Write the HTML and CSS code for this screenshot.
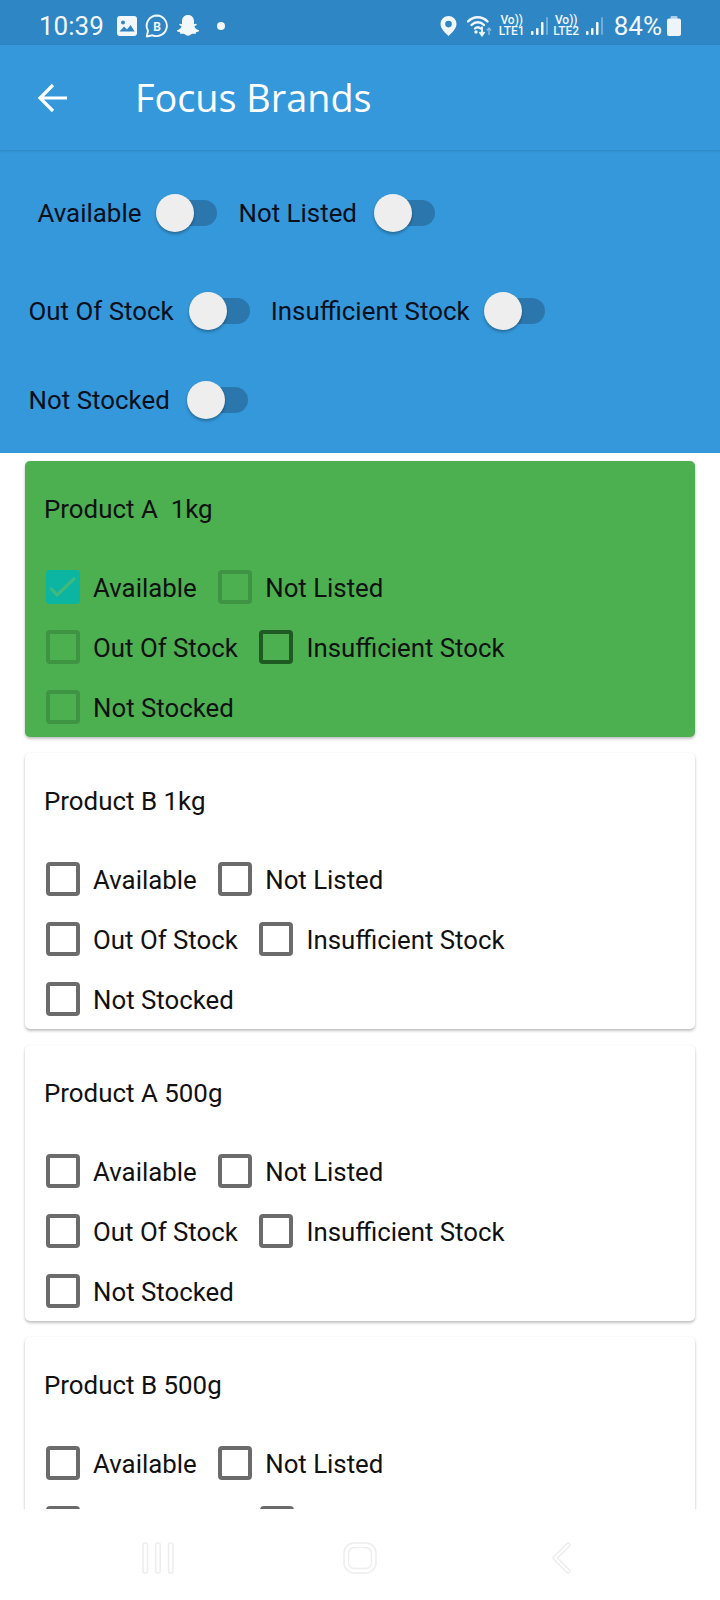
FILE: index.html
```html
<!DOCTYPE html>
<html lang="en">
<head>
<meta charset="utf-8">
<title>Focus Brands</title>
<link rel="stylesheet" href="styles.css">
</head>
<body>
<div class="phone">
  <header class="status">
    <div class="status-left">
      <span class="time">10:39</span>
      <svg class="ic-img" viewBox="0 0 20 20"><rect width="20" height="20" rx="3" fill="#f2f7fb"/><circle cx="6" cy="6.4" r="2" fill="#2e86c4"/><path d="M2.500 15.500 7 10.500l3 3 3.600-4.600 4 6.600z" fill="#2e86c4"/></svg>
      <svg class="ic-biz" viewBox="0 0 24 24"><path d="M12 1.500a10.300 10.300 0 0 0-9 15.300L1.800 22.500l5.800-1.200A10.300 10.300 0 1 0 12 1.500z" fill="none" stroke="#f2f7fb" stroke-width="1.900" stroke-linejoin="round"/><text x="12" y="16.600" text-anchor="middle" class="biz-b">B</text></svg>
      <svg class="ic-snap" viewBox="0 0 24 24"><path d="M12 1c3.700 0 6 2.700 6 6.200v3.100l2-.5c.9 0 1.100 1 .3 1.500l-1.900 1c.5 2 2 3.300 4.300 4 .6.200.5 1-.2 1.300-1 .4-2 .5-2.500.8-.3.500-.2 1.500-.9 1.500-1 0-2.300-.4-3.400.1-1 .5-2 1.800-3.700 1.800s-2.700-1.300-3.700-1.800c-1.100-.5-2.400-.1-3.400-.1-.7 0-.6-1-.9-1.500-.5-.3-1.500-.4-2.500-.8-.7-.3-.8-1.100-.2-1.300 2.300-.7 3.800-2 4.300-4l-1.900-1c-.8-.5-.6-1.500.3-1.500l2 .5V7.200C6 3.700 8.300 1 12 1z" fill="#f2f7fb"/></svg>
      <span class="dot"></span>
    </div>
    <div class="status-right">
      <svg class="ic-pin" viewBox="0 0 17 20"><path fill-rule="evenodd" d="M8.500 0A8 8 0 0 0 .5 8c0 5 5.500 9.600 8 12 2.500-2.400 8-7 8-12a8 8 0 0 0-8-8zm0 4.800a3.300 3.300 0 1 1 0 6.600 3.300 3.300 0 0 1 0-6.600z" fill="#f2f7fb"/></svg>
      <svg class="ic-wifi" viewBox="0 0 25 22"><g fill="none" stroke="#f2f7fb" stroke-width="2.400" stroke-linecap="round"><path d="M1 6.500C6.500 .8 15 .8 20.500 6.500"/><path d="M4.500 10c3.700-3.700 8.800-3.700 12.500 0"/><path d="M8 13.500c1.800-1.700 3.700-1.700 5.500 0"/></g><circle cx="9" cy="17" r="1.700" fill="#f2f7fb"/><path d="M15 11.500v8M12.500 17l2.500 3.500 2.500-3.500" fill="none" stroke="#f2f7fb" stroke-width="1.800"/><path d="M22 20v-7M20 15.500l2-2.500 2 2.500" fill="none" stroke="#8fc0e2" stroke-width="1.300"/></svg>
      <span class="lte"><span>Vo))</span><span>LTE1</span></span>
      <svg class="ic-sig" viewBox="0 0 17 20"><rect x="0" y="15" width="2.500" height="4" rx="1" fill="#f2f7fb"/><rect x="5" y="12" width="2.500" height="7" rx="1" fill="#f2f7fb"/><rect x="10" y="6" width="2.500" height="13" rx="1" fill="#f2f7fb"/><rect x="15" y="1" width="2" height="18" rx="1" fill="#6fadd8"/></svg>
      <span class="lte lte-2"><span>Vo))</span><span>LTE2</span></span>
      <svg class="ic-sig" viewBox="0 0 17 20"><rect x="0" y="15" width="2.500" height="4" rx="1" fill="#f2f7fb"/><rect x="5" y="12" width="2.500" height="7" rx="1" fill="#f2f7fb"/><rect x="10" y="6" width="2.500" height="13" rx="1" fill="#f2f7fb"/><rect x="15" y="1" width="2" height="18" rx="1" fill="#6fadd8"/></svg>
      <span class="pct">84%</span>
      <svg class="ic-bat" viewBox="0 0 14 20"><rect x="3.500" y="0" width="7" height="3" rx="1" fill="#a9cfe9"/><rect x="0" y="2.500" width="14" height="17.500" rx="2" fill="#eef5fa"/></svg>
    </div>
  </header>

  <div class="appbar">
    <svg class="back" viewBox="0 0 30 30"><path d="M29 15H2M15 2 2 15l13 13" fill="none" stroke="#fff" stroke-width="3.200"/></svg>
    <h1 class="title">Focus Brands</h1>
  </div>

  <section class="filters">
    <div class="filter-row row-a">
      <span class="filter-label">Available</span><span class="toggle"></span>
      <span class="filter-label next">Not Listed</span><span class="toggle"></span>
    </div>
    <div class="filter-row row-b">
      <span class="filter-label">Out Of Stock</span><span class="toggle"></span>
      <span class="filter-label next">Insufficient Stock</span><span class="toggle"></span>
    </div>
    <div class="filter-row row-c">
      <span class="filter-label">Not Stocked</span><span class="toggle"></span>
    </div>
  </section>

  <main class="list">
    <article class="card card-green">
      <h2 class="product">Product A&nbsp; 1kg</h2>
      <div class="opts">
        <label class="opt"><span class="box box-checked"><svg viewBox="0 0 34 34"><path d="M4.500 18l6.500 7 18-17" fill="none" stroke="#3fb97c" stroke-width="3.200"/></svg></span><span class="opt-text">Available</span></label>
        <label class="opt"><span class="box"></span><span class="opt-text">Not Listed</span></label>
      </div>
      <div class="opts">
        <label class="opt"><span class="box"></span><span class="opt-text">Out Of Stock</span></label>
        <label class="opt"><span class="box box-dark"></span><span class="opt-text">Insufficient Stock</span></label>
      </div>
      <div class="opts">
        <label class="opt"><span class="box"></span><span class="opt-text">Not Stocked</span></label>
      </div>
    </article>

    <article class="card">
      <h2 class="product">Product B 1kg</h2>
      <div class="opts">
        <label class="opt"><span class="box"></span><span class="opt-text">Available</span></label>
        <label class="opt"><span class="box"></span><span class="opt-text">Not Listed</span></label>
      </div>
      <div class="opts">
        <label class="opt"><span class="box"></span><span class="opt-text">Out Of Stock</span></label>
        <label class="opt"><span class="box"></span><span class="opt-text">Insufficient Stock</span></label>
      </div>
      <div class="opts">
        <label class="opt"><span class="box"></span><span class="opt-text">Not Stocked</span></label>
      </div>
    </article>

    <article class="card">
      <h2 class="product">Product A 500g</h2>
      <div class="opts">
        <label class="opt"><span class="box"></span><span class="opt-text">Available</span></label>
        <label class="opt"><span class="box"></span><span class="opt-text">Not Listed</span></label>
      </div>
      <div class="opts">
        <label class="opt"><span class="box"></span><span class="opt-text">Out Of Stock</span></label>
        <label class="opt"><span class="box"></span><span class="opt-text">Insufficient Stock</span></label>
      </div>
      <div class="opts">
        <label class="opt"><span class="box"></span><span class="opt-text">Not Stocked</span></label>
      </div>
    </article>

    <article class="card">
      <h2 class="product">Product B 500g</h2>
      <div class="opts">
        <label class="opt"><span class="box"></span><span class="opt-text">Available</span></label>
        <label class="opt"><span class="box"></span><span class="opt-text">Not Listed</span></label>
      </div>
      <div class="opts">
        <span class="box"></span>
        <span class="box box-second"></span>
      </div>
    </article>
  </main>

  <nav class="navbar">
    <span class="nav-slot"><svg class="nav-recent" viewBox="0 0 32 32"><g fill="none" stroke="#ededed" stroke-width="1.500"><rect x="1" y="1" width="4.500" height="30" rx="2"/><rect x="13.700" y="1" width="4.500" height="30" rx="2"/><rect x="26.500" y="1" width="4.500" height="30" rx="2"/></g></svg></span>
    <span class="nav-slot"><svg class="nav-home" viewBox="0 0 34 32"><g fill="none" stroke="#ededed" stroke-width="1.500"><rect x="1" y="1" width="32" height="30" rx="10"/><rect x="5.500" y="5.500" width="23" height="21" rx="6"/></g></svg></span>
    <span class="nav-slot"><svg class="nav-back" viewBox="0 0 20 32"><path d="M16 3 3 16l13 13" fill="none" stroke="#ededed" stroke-width="5" stroke-linecap="round" stroke-linejoin="round"/><path d="M16 3 3 16l13 13" fill="none" stroke="#fff" stroke-width="2.200" stroke-linecap="round" stroke-linejoin="round"/></svg></span>
  </nav>
</div>
</body>
</html>
```

FILE: styles.css
```css
* { box-sizing: border-box; }
html, body { margin: 0; padding: 0; }
body { background: #fff; font-family: Roboto, "Liberation Sans", sans-serif; }

.phone { width: 720px; height: 1600px; display: flex; flex-direction: column; overflow: hidden; }

/* status bar */
.status { height: 45px; flex: none; background: #2e86c4; display: flex; justify-content: space-between; align-items: center; padding: 7px 39px 0 39px; color: #f2f7fb; }
.status-left, .status-right { display: flex; align-items: center; }
.time { font-size: 26px; line-height: 30px; margin-right: 13px; }
.ic-img { width: 20px; height: 20px; margin-right: 8px; }
.ic-biz { width: 24px; height: 24px; margin-right: 7px; }
.ic-snap { width: 24px; height: 24px; margin-right: 17px; }
.biz-b { font-family: Roboto, sans-serif; font-size: 12px; font-weight: 700; fill: #f2f7fb; }
.dot { width: 8px; height: 8px; border-radius: 50%; background: #f2f7fb; }
.ic-pin { width: 17px; height: 20px; margin-right: 10px; }
.ic-wifi { width: 25px; height: 22px; margin-right: 8px; }
.lte { display: flex; flex-direction: column; align-items: center; font-size: 12px; line-height: 11px; width: 24px; margin-right: 7px; font-weight: 500; }
.lte-2 { width: 25px; }
.ic-sig { width: 17px; height: 20px; margin-right: 6px; }
.lte-2 + .ic-sig { margin-right: 11px; }
.pct { font-size: 26px; line-height: 30px; margin-right: 5px; }
.ic-bat { width: 14px; height: 20px; }

/* app bar */
.appbar { height: 105px; flex: none; background: #3498db; display: flex; align-items: center; padding-left: 38px; box-shadow: 0 1px 2px rgba(0, 0, 0, .12); position: relative; }
.back { width: 30px; height: 30px; margin-right: 67px; }
.title { margin: 0; font-family: "Open Sans", "Noto Sans", sans-serif; font-weight: 400; font-size: 37.800px; line-height: 44px; color: #fff; }

/* filter panel */
.filters { height: 303px; flex: none; background: #3498db; padding-top: 44px; }
.filter-row { display: flex; align-items: center; height: 38px; }
.row-a { padding-left: 37.500px; }
.row-b { padding-left: 28.500px; margin-top: 60px; }
.row-c { padding-left: 28.500px; margin-top: 51px; }
.filter-label { font-size: 25.900px; line-height: 30px; color: #0a0f1c; margin-right: 15px; }
.filter-label.next { margin-left: 21px; }
.row-a .filter-label.next { margin-right: 17px; }
.row-b .filter-label.next { margin-right: 14px; }
.row-c .filter-label { margin-right: 17.500px; }
.toggle { width: 61px; height: 38px; flex: none; position: relative; }
.toggle::before { content: ""; position: absolute; left: 14px; right: 0; top: 6px; height: 26px; border-radius: 13px; background: #2b77ad; }
.toggle::after { content: ""; position: absolute; left: 0; top: 0; width: 38px; height: 38px; border-radius: 50%; background: #eeeeee; box-shadow: 0 2px 3px rgba(0, 0, 0, .3); }

/* product list */
.list { flex: 1; min-height: 0; overflow: hidden; padding: 8px 25px 0; display: flex; flex-direction: column; gap: 16px; }
.card { height: 276px; flex: none; background: #fff; border-radius: 5px; box-shadow: 0 2px 3px rgba(0, 0, 0, .24), 0 0 2px rgba(0, 0, 0, .07); padding-left: 19px; }
.card-green { background: #4caf50; }
.product { margin: 0; height: 96px; padding-top: 0; font-weight: 400; font-size: 25.900px; line-height: 96px; color: #111; }
.opts { display: flex; align-items: center; gap: 21px; height: 60px; padding-left: 1.500px; }
.opt { display: flex; align-items: center; gap: 13.600px; font-size: 25.800px; line-height: 30px; color: #111; }
.opt-text { padding-top: 2px; }
.box { width: 34px; height: 34px; flex: none; border: 4px solid #6b6b6b; border-radius: 4px; display: block; }
.box-second { margin-left: 159px; }
.card-green .box { border-color: #3f9443; }
.card-green .box-dark { border-color: #1e5a22; }
.card-green .box-checked { border: 0; background: #0bb5a2; }
.box svg { display: block; width: 34px; height: 34px; }

/* navigation bar */
.navbar { height: 91px; flex: none; background: #fff; display: flex; justify-content: center; align-items: flex-start; padding-top: 33px; position: relative; }
.nav-slot { width: 202px; height: 32px; display: flex; justify-content: center; }
.nav-recent { width: 32px; height: 32px; }
.nav-home { width: 34px; height: 32px; }
.nav-back { width: 20px; height: 32px; }
```
